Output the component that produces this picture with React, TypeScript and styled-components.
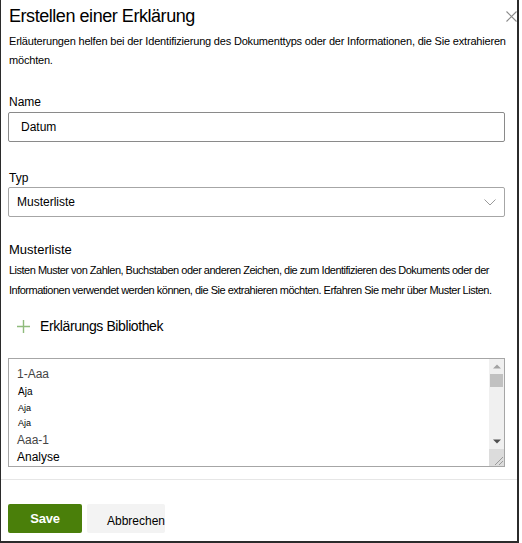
import React from "react";
import styled, { createGlobalStyle } from "styled-components";

const Global = createGlobalStyle`
  html, body { margin: 0; padding: 0; background: #fff; }
  body { font-family: "Liberation Sans", Arial, sans-serif; color: #201f1e; }
  * { box-sizing: border-box; }
`;

const Frame = styled.div`
  width: 519px;
  height: 543px;
  border-left: 1px solid #2b2b2b;
  border-right: 2px solid #2b2b2b;
  border-bottom: 2px solid #2b2b2b;
  display: flex;
  flex-direction: column;
  overflow: hidden;
`;

const Header = styled.div`
  display: flex;
  align-items: center;
  justify-content: space-between;
  margin-top: 4px;
  padding-left: 8px;
  height: 24px;
`;

const Title = styled.h1`
  margin: 0;
  font-size: 18px;
  font-weight: 400;
  letter-spacing: -0.45px;
  line-height: 24px;
  color: #000;
`;

const CloseBtn = styled.div`
  width: 11px;
  height: 12px;
  display: flex;
  align-items: center;
  justify-content: flex-start;
  margin-top: 1px;
`;

const Body = styled.div`
  padding: 0 12px 0 7px;
  display: flex;
  flex-direction: column;
`;

const Desc = styled.p<{ $top: number; $lh: number; $ls: number }>`
  margin: ${(p) => p.$top}px 0 0 0;
  padding-left: 1px;
  font-size: 11px;
  letter-spacing: ${(p) => p.$ls}px;
  line-height: ${(p) => p.$lh}px;
  color: #000;
  white-space: nowrap;
`;

const Label = styled.div<{ $top: number }>`
  margin-top: ${(p) => p.$top}px;
  padding-left: 1px;
  font-size: 12px;
  line-height: 16px;
  color: #000;
`;

const Field = styled.div`
  margin-top: 2px;
  height: 30px;
  width: 497px;
  border: 1px solid #8a8a8a;
  border-radius: 2px;
  display: flex;
  align-items: center;
  font-size: 12px;
  color: #000;
`;

const InputText = styled.span`
  padding-left: 12px;
`;

const SelectBox = styled(Field)`
  justify-content: space-between;
  border-color: #a6a6a6;
  margin-top: 1px;
`;

const SelectText = styled.span`
  padding-left: 8px;
`;

const Chevron = styled.span`
  display: flex;
  padding-right: 8px;
`;

const SectionTitle = styled.div`
  margin-top: 24px;
  padding-left: 1px;
  font-size: 13px;
  line-height: 18px;
  color: #000;
`;

const AddRow = styled.div`
  margin-top: 16px;
  height: 20px;
  display: flex;
  align-items: center;
  gap: 10px;
  padding-left: 9px;
  font-size: 14px;
  letter-spacing: -0.4px;
  color: #000;
`;

const ListBox = styled.div`
  margin-top: 22px;
  width: 497px;
  height: 109px;
  border: 1px solid #a6a6a6;
  display: flex;
`;

const Items = styled.div`
  flex: 1;
  padding: 7px 0 0 8px;
  display: flex;
  flex-direction: column;
`;

const Item = styled.div<{ $h: number; $size: number; $color: string }>`
  height: ${(p) => p.$h}px;
  line-height: ${(p) => p.$h}px;
  font-size: ${(p) => p.$size}px;
  color: ${(p) => p.$color};
  padding-left: ${(p) => (p.$size < 11 ? 1 : 0)}px;
`;

const Track = styled.div`
  width: 15px;
  background: #f0f0f0;
  display: flex;
  flex-direction: column;
`;

const ArrowCell = styled.div`
  height: 15px;
  display: flex;
  align-items: center;
  justify-content: center;
`;

const Thumb = styled.div`
  height: 13px;
  margin: 0 1px;
  background: #c1c1c1;
`;

const Spacer = styled.div`
  flex: 1;
`;

const Grip = styled.div`
  height: 17px;
  background: #dcdcdc;
  display: flex;
  align-items: flex-end;
  justify-content: flex-end;
`;

const Separator = styled.div`
  margin-top: 12px;
  height: 1px;
  background: #e6e6e6;
`;

const Buttons = styled.div`
  margin-top: 24px;
  padding-left: 7px;
  display: flex;
  gap: 5px;
`;

const PrimaryButton = styled.button`
  width: 74px;
  height: 29px;
  border: none;
  border-radius: 2px;
  background: #4a7f0a;
  color: #fff;
  font-family: "Liberation Sans", Arial, sans-serif;
  font-size: 13px;
  font-weight: 700;
  padding: 0;
  letter-spacing: -0.2px;
`;

const SecondaryButton = styled.button`
  width: 78px;
  height: 29px;
  border: none;
  border-radius: 2px;
  background: #f3f3f3;
  color: #000;
  font-family: "Liberation Sans", Arial, sans-serif;
  font-size: 12px;
  padding: 5px 0 0 20px;
  text-align: left;
  white-space: nowrap;
  overflow: visible;
`;

export default function App() {
  return (
    <>
      <Global />
      <Frame>
        <Header>
          <Title>Erstellen einer Erklärung</Title>
          <CloseBtn>
            <svg width="11" height="11" viewBox="0 0 11 11">
              <path d="M0.5 0.5 L10.5 10.5 M10.5 0.5 L0.5 10.5" stroke="#8a8a8a" strokeWidth="1.1" />
            </svg>
          </CloseBtn>
        </Header>
        <Body>
          <Desc $top={4} $lh={19} $ls={-0.19}>
            Erläuterungen helfen bei der Identifizierung des Dokumenttyps oder der Informationen, die Sie extrahieren
            <br />
            möchten.
          </Desc>
          <Label $top={24}>Name</Label>
          <Field>
            <InputText>Datum</InputText>
          </Field>
          <Label $top={28}>Typ</Label>
          <SelectBox>
            <SelectText>Musterliste</SelectText>
            <Chevron>
              <svg width="12" height="7" viewBox="0 0 12 7">
                <path d="M0.5 0.5 L6 6 L11.5 0.5" fill="none" stroke="#9a9a9a" strokeWidth="1" />
              </svg>
            </Chevron>
          </SelectBox>
          <SectionTitle>Musterliste</SectionTitle>
          <Desc $top={1} $lh={20} $ls={-0.5}>
            Listen Muster von Zahlen, Buchstaben oder anderen Zeichen, die zum Identifizieren des Dokuments oder der
            <br />
            Informationen verwendet werden können, die Sie extrahieren möchten. Erfahren Sie mehr über Muster Listen.
          </Desc>
          <AddRow>
            <svg width="13" height="13" viewBox="0 0 13 13">
              <path d="M6.5 0 V13 M0 6.5 H13" stroke="#8fbb7c" strokeWidth="1.4" />
            </svg>
            <span>Erklärungs Bibliothek</span>
          </AddRow>
          <ListBox>
            <Items>
              <Item $h={17} $size={12} $color="#444">1-Aaa</Item>
              <Item $h={17} $size={10} $color="#000">Aja</Item>
              <Item $h={16} $size={9} $color="#000">Aja</Item>
              <Item $h={15} $size={9} $color="#000">Aja</Item>
              <Item $h={18} $size={12} $color="#444">Aaa-1</Item>
              <Item $h={17} $size={12} $color="#000">Analyse</Item>
            </Items>
            <Track>
              <ArrowCell>
                <svg width="8" height="5" viewBox="0 0 8 5">
                  <path d="M0 4.5 L4 0.5 L8 4.5 Z" fill="#a3a3a3" />
                </svg>
              </ArrowCell>
              <Thumb />
              <Spacer />
              <ArrowCell>
                <svg width="8" height="5" viewBox="0 0 8 5">
                  <path d="M0 0.5 L4 4.5 L8 0.5 Z" fill="#505050" />
                </svg>
              </ArrowCell>
              <Grip>
                <svg width="12" height="12" viewBox="0 0 12 12">
                  <path d="M11 3 L3 11 M11 7 L7 11" stroke="#9a9a9a" strokeWidth="1" />
                </svg>
              </Grip>
            </Track>
          </ListBox>
        </Body>
        <Separator />
        <Buttons>
          <PrimaryButton>Save</PrimaryButton>
          <SecondaryButton>Abbrechen</SecondaryButton>
        </Buttons>
      </Frame>
    </>
  );
}
